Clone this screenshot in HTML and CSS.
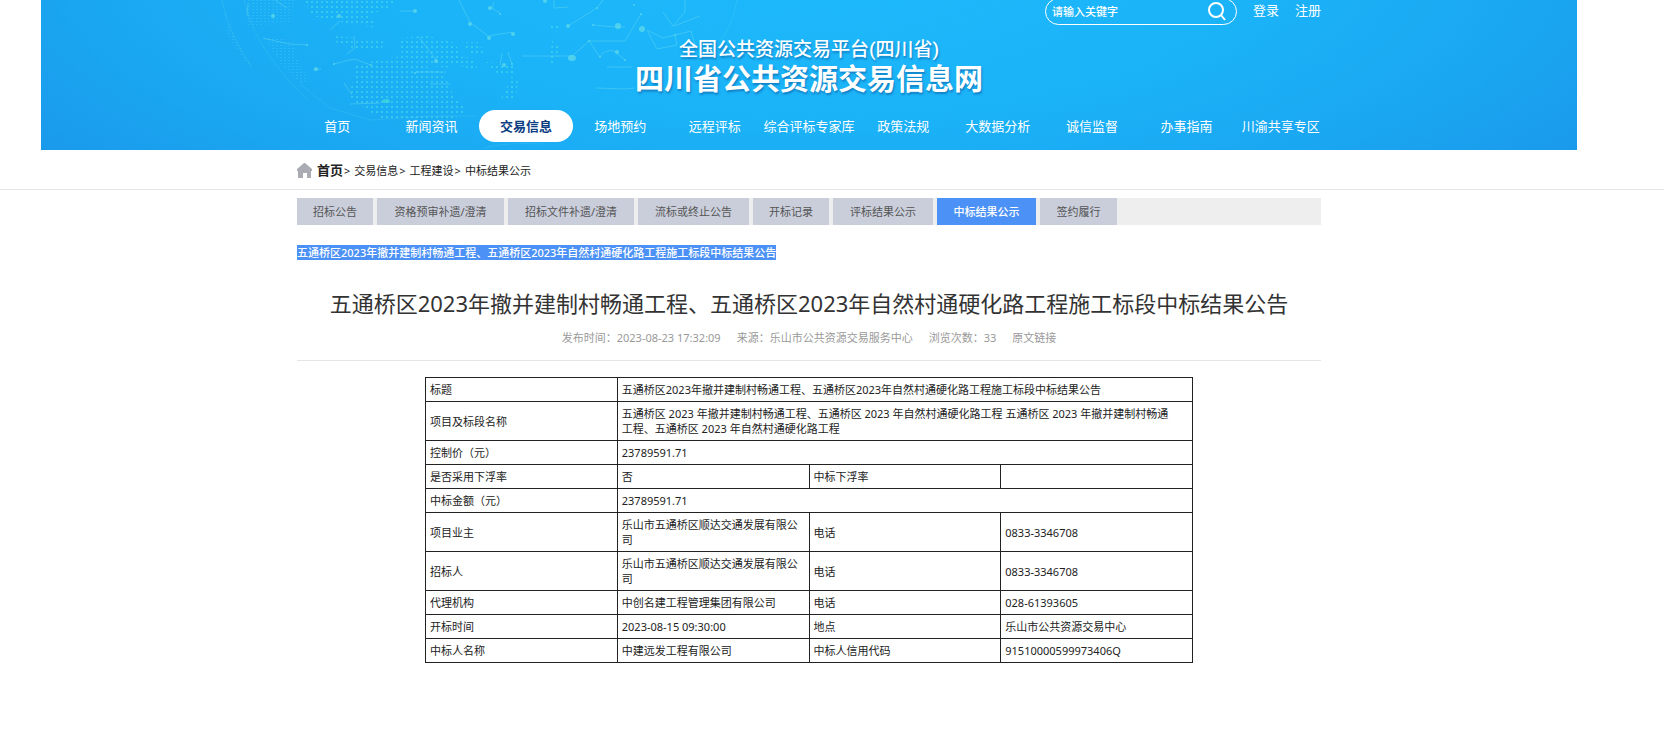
FILE: index.html
```html
<!DOCTYPE html>
<html lang="zh-CN">
<head>
<meta charset="utf-8">
<title>中标结果公示</title>
<link rel="stylesheet" href="styles.css">
</head>
<body>
<header class="band">
  <div class="banner">
    <svg class="globe" viewBox="0 0 560 150" width="560" height="150" aria-hidden="true">
      <defs>
        <pattern id="dots" width="5" height="5" patternUnits="userSpaceOnUse"><circle cx="2" cy="2" r="1" fill="#4fe0e6"/></pattern>
        <pattern id="fine" width="4" height="3" patternUnits="userSpaceOnUse"><rect width="2" height="1" fill="#4fd0f4"/></pattern>
      </defs>
      <g opacity=".7">
        <path fill="url(#dots)" d="M104 0h92l-6 8-20 6 6 14-24-4-20-4-20-4zM134 36l24 2 28 4-6 8-24 0-20-8zM198 38l30-2 24 6 8 8 0 12-14 6-24-4-18-8-6-10zM262 42l18 0 4 12-12 2zM254 56l20 2 4 12-20-4zM286 62l26 2 4 10-18 0zM156 66l22-6 24-4 24 10 16 6 8 14 4 12 14 12-14 8-30 2-40 0-20-12-16-12 6-18zM346 24l14 2-4 6zM352 40l8 6-6 18-4-2zM310 76l8 4-2 18-16 2 6-10z"/>
        <path fill="url(#fine)" opacity=".45" d="M48 0h46l-2 22-44 4zM64 38l28 2 6 22 12 18-8 4-20-18zM24 10l8 22 20 34-4 0-20-30z"/>
      </g>
      <g fill="none" stroke="#6fe0ee" stroke-width="1" opacity=".4">
        <path d="M75 0l12 8M48 4l-1 12M63 38l26 6 19 1M154 36l1 12-8 6M134 64l20-5 17 6M218 36l19 25M130 30l10-9M200 11h15M259 0l11 22 18 14 25-4M322 56h50M292 8l8 5M292 8l2-6M354 0l0 8 14-1M403 0l-6 8-29 18M441 14l-16 27h-36l-18 16M389 41l11 16M400 57q4-8 14-6l11 9M393 25l22 2 10 0M447 30l16 8 12-3 2 10-20 4-10-19M463 12l10 14 12-14 0-12M474 26l26-10M475 35l16-4 4 14M407 67h25M396 88l28 1 10-1M302 53l-2 12M308 52l4 12M216 72h30M230 84h20M113 70l8-1M150 104l30-1M144 83l8 12"/>
        <path opacity=".45" d="M22 0c6 26 14 44 30 68M44 0c8 34 28 66 64 100M537 0q-4 24-16 40M100 84l30 24 40 12 60-4 46 0M284 148q20-6 60-4"/>
      </g>
      <g fill="#62ddea" opacity=".7">
        <circle cx="73" cy="16" r="2"/><circle cx="270" cy="24" r="2"/><circle cx="289" cy="38" r="2"/><circle cx="313" cy="34" r="2"/><circle cx="215" cy="11" r="2"/><circle cx="290" cy="8" r="2"/><circle cx="300" cy="14" r="1"/><circle cx="345" cy="1" r="2"/><circle cx="139" cy="16" r="2"/><circle cx="134" cy="64" r="1"/><circle cx="236" cy="61" r="2"/><circle cx="215" cy="73" r="1"/><circle cx="304" cy="65" r="2"/><circle cx="312" cy="64" r="1"/><circle cx="116" cy="69" r="2"/><ellipse cx="186" cy="101" rx="4" ry="2" fill="#45dbd8"/><circle cx="368" cy="26" r="2"/><circle cx="397" cy="8" r="1"/><circle cx="393" cy="25" r="1"/><circle cx="418" cy="26" r="3"/><circle cx="434" cy="5" r="1"/><circle cx="441" cy="14" r="1"/><circle cx="442" cy="29" r="3"/><circle cx="417" cy="52" r="2"/><ellipse cx="372" cy="58" rx="4" ry="3"/><circle cx="425" cy="60" r="1"/><circle cx="400" cy="57" r="1"/><circle cx="107" cy="45" r="1"/><circle cx="171" cy="65" r="1"/><circle cx="389" cy="41" r="1"/><circle cx="475" cy="35" r="1"/>
      </g>
    </svg>
    <div class="wrap">
      <div class="tools">
        <form class="search">
          <input type="text" aria-label="请输入关键字" placeholder="请输入关键字">
          <button type="button" aria-label="搜索"><svg viewBox="0 0 18 19" width="18" height="19"><circle cx="8" cy="8" r="7"/><path d="M13 13L17 18"/></svg></button>
        </form>
        <a href="#">登录</a>
        <a href="#">注册</a>
      </div>
      <div class="logo">
        <div class="logo-sub">全国公共资源交易平台(四川省)</div>
        <div class="logo-main">四川省公共资源交易信息网</div>
      </div>
      <nav class="nav">
        <a href="#">首页</a><a href="#">新闻资讯</a><a href="#" class="on">交易信息</a><a href="#">场地预约</a><a href="#">远程评标</a><a href="#">综合评标专家库</a><a href="#">政策法规</a><a href="#">大数据分析</a><a href="#">诚信监督</a><a href="#">办事指南</a><a href="#">川渝共享专区</a>
      </nav>
    </div>
  </div>
</header>
<div class="band crumbs">
  <div class="wrap crumb-row">
    <svg viewBox="0 0 15 15" width="15" height="15" aria-hidden="true"><path fill="#a9acb3" d="M7 0h1l7 6v2h-1v7h-4v-5H6v5H1V8H0V6z"/></svg>
    <a href="#" class="home">首页</a><span>&gt;</span><a href="#">交易信息</a><span>&gt;</span><a href="#">工程建设</a><span>&gt;</span><a href="#">中标结果公示</a>
  </div>
</div>
<main class="band">
  <div class="wrap">
    <div class="tabs">
      <button type="button">招标公告</button><button type="button">资格预审补遗/澄清</button><button type="button">招标文件补遗/澄清</button><button type="button">流标或终止公告</button><button type="button">开标记录</button><button type="button">评标结果公示</button><button type="button" class="on">中标结果公示</button><button type="button">签约履行</button>
    </div>
    <p class="lead"><mark>五通桥区2023年撤并建制村畅通工程、五通桥区2023年自然村通硬化路工程施工标段中标结果公告</mark></p>
    <h1>五通桥区2023年撤并建制村畅通工程、五通桥区2023年自然村通硬化路工程施工标段中标结果公告</h1>
    <div class="meta"><span>发布时间：2023-08-23 17:32:09</span><span>来源：乐山市公共资源交易服务中心</span><span>浏览次数：33</span><a href="#">原文链接</a></div>
    <table>
      <colgroup><col><col><col><col></colgroup>
      <tbody>
      <tr><td>标题</td><td colspan="3">五通桥区2023年撤并建制村畅通工程、五通桥区2023年自然村通硬化路工程施工标段中标结果公告</td></tr>
      <tr><td>项目及标段名称</td><td colspan="3">五通桥区 2023 年撤并建制村畅通工程、五通桥区 2023 年自然村通硬化路工程 五通桥区 2023 年撤并建制村畅通<br>工程、五通桥区 2023 年自然村通硬化路工程</td></tr>
      <tr><td>控制价（元）</td><td colspan="3">23789591.71</td></tr>
      <tr><td>是否采用下浮率</td><td>否</td><td>中标下浮率</td><td></td></tr>
      <tr><td>中标金额（元）</td><td colspan="3">23789591.71</td></tr>
      <tr><td>项目业主</td><td>乐山市五通桥区顺达交通发展有限公司</td><td>电话</td><td>0833-3346708</td></tr>
      <tr><td>招标人</td><td>乐山市五通桥区顺达交通发展有限公司</td><td>电话</td><td>0833-3346708</td></tr>
      <tr><td>代理机构</td><td>中创名建工程管理集团有限公司</td><td>电话</td><td>028-61393605</td></tr>
      <tr><td>开标时间</td><td>2023-08-15 09:30:00</td><td>地点</td><td>乐山市公共资源交易中心</td></tr>
      <tr><td>中标人名称</td><td>中建远发工程有限公司</td><td>中标人信用代码</td><td>91510000599973406Q</td></tr>
      </tbody>
    </table>
  </div>
</main>
</body>
</html>
```
FILE: styles.css
```css
* { box-sizing: border-box; }
body {
  margin: 0;
  background: #fff;
  color: #222;
  font: 11px/15px "Noto Sans", "Noto Sans CJK SC", sans-serif;
}
a { color: inherit; text-decoration: none; }
input, button { font: inherit; color: inherit; border: 0; padding: 0; background: none; }
.band { padding-right: 46px; }
.wrap { max-width: 1024px; margin: 0 auto; }

.banner {
  position: relative;
  overflow: hidden;
  max-width: 1536px;
  margin: 0 auto;
  padding-bottom: 8px;
  color: #fff;
  background: radial-gradient(ellipse 1000px 330px at 50% -30px, #1db9fb 0%, #1bb3f8 45%, #1aa7f1 72%, #1a96e9 100%);
}
.globe { position: absolute; left: 159px; top: 0; }
.banner .wrap { position: relative; }
.tools {
  display: flex;
  justify-content: flex-end;
  align-items: center;
  gap: 16px;
  height: 27px;
  margin-top: -2px;
  font-size: 13px;
}
.tools a { padding-bottom: 2px; }
.search {
  display: flex;
  align-items: center;
  width: 192px;
  height: 27px;
  padding: 0 10px 0 6px;
  border: 1px solid #fff;
  border-radius: 14px;
}
.search input { flex: 1; min-width: 0; font-size: 11px; font-weight: 500; outline: 0; }
.search input::placeholder { color: #fff; opacity: 1; }
.search button { display: flex; }
.search svg { fill: none; stroke: #fff; stroke-width: 2; }
.logo {
  padding-top: 13px;
  text-align: center;
  font-family: Roboto, "Noto Sans CJK SC", sans-serif;
  text-shadow: 1px 2px 2px rgba(10, 80, 150, .5);
}
.logo-sub { font-size: 19px; line-height: 24px; font-weight: 500; }
.logo-main { font-size: 29px; line-height: 36px; font-weight: 700; }
.nav {
  display: grid;
  grid-template-columns: repeat(11, 1fr);
  margin: 12px -7px 0;
  font-size: 13px;
  line-height: 32px;
  text-align: center;
  white-space: nowrap;
}
.nav .on { background: #fff; color: #0a3c82; font-weight: 600; border-radius: 16px; }

.crumbs { border-bottom: 1px solid #e5e5e5; }
.crumb-row { display: flex; align-items: center; height: 39px; padding-top: 2px; }
.crumb-row span { margin: 0 4px 0 1px; }
.crumb-row .home { margin-left: 5px; font-size: 13px; font-weight: 600; }

.tabs {
  display: grid;
  grid-template-columns: 76px 127px 126px 111px 76px 100px 99px 77px;
  gap: 4px;
  margin-top: 8px;
  background: #eee;
}
.tabs button { height: 27px; background: #cacedb; color: #555; white-space: nowrap; }
.tabs .on { background: #4c91f5; color: #fff; font-weight: 500; }
.lead { margin: 20px 0 0; }
.lead mark { display: inline-block; background: #4c91f5; color: #fff; font-weight: 500; }
h1 {
  margin: 27px 0 0;
  font-size: 22px;
  line-height: 32px;
  font-weight: 400;
  color: #333;
  text-align: center;
}
.meta {
  display: flex;
  justify-content: center;
  gap: 16px;
  padding: 11px 0 15px;
  border-bottom: 1px solid #e5e5e5;
  color: #999;
}
table {
  width: 75%;
  margin: 16px auto 85px;
  border-collapse: collapse;
  table-layout: fixed;
}
td { height: 24px; padding: 4px; border: 1px solid #222; }
```
